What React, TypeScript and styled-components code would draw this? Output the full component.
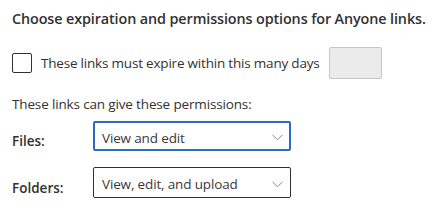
import React from "react";
import styled, { createGlobalStyle } from "styled-components";

const Global = createGlobalStyle`
  html, body { margin: 0; padding: 0; background: #ffffff; }
  body { font-family: "Open Sans", "Noto Sans", sans-serif; color: #323130; }
`;

const Page = styled.div`
  width: 436px;
  height: 213px;
  padding: 9px 12px 0 12px;
  box-sizing: border-box;
  display: flex;
  flex-direction: column;
`;

const Heading = styled.h2`
  margin: 0;
  font-size: 14.4px;
  font-weight: 600;
  line-height: 20px;
  color: #323130;
  white-space: nowrap;
  letter-spacing: -0.12px;
`;

const CheckRow = styled.div`
  display: flex;
  align-items: center;
  margin-top: 18px;
  height: 32px;
`;

const Box = styled.span`
  width: 18px;
  height: 18px;
  border: 1px solid #323130;
  border-radius: 2px;
  flex: none;
`;

const Label = styled.span`
  font-size: 13.5px;
  margin-left: 9px;
  color: #323130;
  letter-spacing: -0.2px;
`;

const DaysInput = styled.span`
  width: 51px;
  height: 30px;
  margin-left: 9px;
  background: #ebebeb;
  border: 1px solid #c8c6c4;
  border-radius: 2px;
  flex: none;
`;

const Caption = styled.div`
  margin-top: 15px;
  font-size: 13.5px;
  line-height: 20px;
  letter-spacing: -0.15px;
`;

const FieldRow = styled.div<{ $top: number }>`
  display: grid;
  grid-template-columns: 81px 198px;
  align-items: center;
  margin-top: ${(p) => p.$top}px;
`;

const FieldLabel = styled.span`
  font-size: 13.5px;
  font-weight: 600;
  padding-top: 10px;
`;

const Select = styled.div<{ $focused?: boolean }>`
  height: ${(p) => (p.$focused ? 30 : 31)}px;
  box-sizing: border-box;
  border: ${(p) => (p.$focused ? "2px solid #2b6bc2" : "1px solid #323130")};
  border-radius: 2px;
  display: flex;
  align-items: center;
  justify-content: space-between;
  padding: 3px ${(p) => (p.$focused ? 6 : 7)}px 0 ${(p) => (p.$focused ? 7 : 8)}px;
  font-size: 13.5px;
  color: #3b3a39;
  letter-spacing: -0.15px;
`;

const Chevron = () => (
  <svg width="11" height="7" viewBox="0 0 11 7" fill="none">
    <path d="M0.5 0.8 L5.5 5.8 L10.5 0.8" stroke="#8a8886" strokeWidth="1" />
  </svg>
);

export default function App() {
  return (
    <>
      <Global />
      <Page>
        <Heading>Choose expiration and permissions options for Anyone links.</Heading>
        <CheckRow>
          <Box />
          <Label>These links must expire within this many days</Label>
          <DaysInput />
        </CheckRow>
        <Caption>These links can give these permissions:</Caption>
        <FieldRow $top={7}>
          <FieldLabel>Files:</FieldLabel>
          <Select $focused>
            <span>View and edit</span>
            <Chevron />
          </Select>
        </FieldRow>
        <FieldRow $top={16}>
          <FieldLabel>Folders:</FieldLabel>
          <Select>
            <span>View, edit, and upload</span>
            <Chevron />
          </Select>
        </FieldRow>
      </Page>
    </>
  );
}
